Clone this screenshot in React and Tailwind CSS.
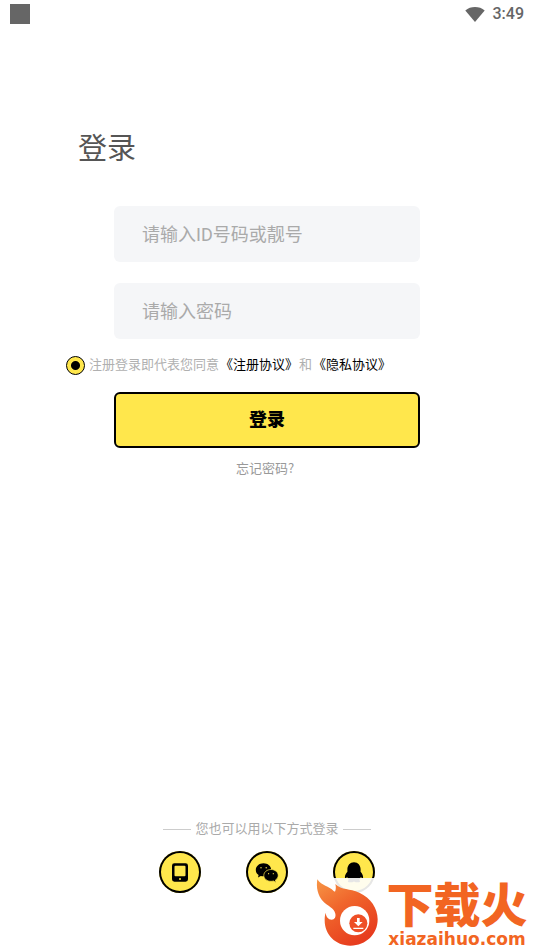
import React, { useState } from "react";

function WifiIcon() {
  return (
    <svg viewBox="0 0 20 15" className="h-[15px] w-5 fill-[#666666]" aria-hidden="true">
      <path d="M10 15 0.300 3.400C3 1.100 6.400 0 10 0s7 1.100 9.700 3.400z" />
    </svg>
  );
}

function TabletIcon() {
  return (
    <svg viewBox="0 0 42 42" className="size-full" aria-hidden="true">
      <path
        fillRule="evenodd"
        d="M15.400 12.300h11.200a2.400 2.400 0 0 1 2.400 2.400v13.600a2.400 2.400 0 0 1-2.400 2.400h-11.200a2.400 2.400 0 0 1-2.400-2.400v-13.600a2.400 2.400 0 0 1 2.400-2.400zm1.100 2.400a1 1 0 0 0-1 1v8.600a1 1 0 0 0 1 1h9a1 1 0 0 0 1-1v-8.600a1 1 0 0 0-1-1zm4.500 12.200a1 1 0 1 0 0 2 1 1 0 0 0 0-2z"
      />
    </svg>
  );
}

function WechatIcon() {
  return (
    <svg viewBox="0 0 42 42" className="size-full" aria-hidden="true">
      <path d="M17.500 12.300c-4.300 0-7.700 2.900-7.700 6.600 0 2.100 1 3.900 2.800 5.100l-.6 2.600 2.800-1.700c.9.300 1.800.4 2.700.4 4.300 0 7.700-2.900 7.700-6.500s-3.400-6.500-7.700-6.500z" />
      <path
        className="fill-black stroke-[#ffe74c]"
        strokeWidth="0.7"
        d="M25 18.500c-4 0-7.200 2.600-7.200 5.900s3.200 5.900 7.200 5.900c.8 0 1.600-.1 2.400-.4l2.600 1.500-.6-2.300c1.700-1.100 2.800-2.800 2.800-4.700 0-3.300-3.200-5.900-7.200-5.900z"
      />
      <g className="fill-[#ffe74c]">
        <circle cx="15" cy="16.800" r=".7" />
        <circle cx="20.200" cy="16.800" r=".7" />
        <circle cx="22.600" cy="22.700" r=".6" />
        <circle cx="27.300" cy="22.700" r=".6" />
      </g>
    </svg>
  );
}

function QQIcon() {
  return (
    <svg viewBox="0 0 42 42" className="size-full" aria-hidden="true">
      <path d="M21 11.200c-4 0-6.600 3.200-6.600 7.300v2.300c-1.400 1.600-2.700 3.600-2.500 5.800.1.900.8.700 1.200.3l1.100-1c.3 1.200.9 2.200 1.700 3-1.200.6-1.500 2.200.8 2.400 1.700.1 3.100-.2 4.300-.9 1.200.7 2.600 1 4.300.9 2.300-.2 2-1.800.8-2.400.8-.8 1.400-1.800 1.700-3l1.100 1c.4.4 1.100.6 1.200-.3.2-2.200-1.100-4.200-2.500-5.800v-2.300c0-4.100-2.600-7.300-6.600-7.300z" />
    </svg>
  );
}

function FlameLogo() {
  return (
    <svg viewBox="0 0 195 213" className="h-[71px] w-[65px] shrink-0" aria-hidden="true">
      <defs>
        <linearGradient id="flame" x1="0" y1="0" x2="0.600" y2="1">
          <stop offset="0" stopColor="#f79646" />
          <stop offset="0.450" stopColor="#f0662c" />
          <stop offset="1" stopColor="#e73c1e" />
        </linearGradient>
      </defs>
      <path
        fill="url(#flame)"
        d="M7 4C20 24 42 24 56 39c3 3 4 2 5-1 2-6 2-12 0-20 20 20 42 12 72 26 34 16 55 46 55 80 0 44-34 79-82 79-45 0-77-33-77-76 0-10 1-17 3-23 1 12 8 21 18 21 9-1 13-8 11-18C58 91 38 84 24 70 8 52 3 28 7 4z"
      />
      <circle cx="119" cy="128" r="44" fill="#fff" />
      <circle cx="130" cy="136" r="27" fill="#ee4f27" />
      <path fill="#fff" d="M126 120h8v12h9l-13 13-13-13h9zM115 149h30v4h-30z" />
    </svg>
  );
}

const methods = [
  { name: "手机登录", Icon: TabletIcon },
  { name: "微信登录", Icon: WechatIcon },
  { name: "QQ登录", Icon: QQIcon },
];

export default function App() {
  const [account, setAccount] = useState("");
  const [password, setPassword] = useState("");

  return (
    <div className="relative flex min-h-screen flex-col overflow-hidden bg-white font-['Roboto','Noto_Sans_CJK_SC',sans-serif]">
      <header className="flex h-7 items-center justify-between px-[10px]">
        <span className="size-5 bg-[#666666]" />
        <div className="flex items-center gap-2">
          <WifiIcon />
          <time className="text-base font-medium text-[#666666]">3:49</time>
        </div>
      </header>

      <main>
        <h1 className="mt-[100px] px-[78px] text-[29px] leading-[42px] text-[#555555]">登录</h1>
        <form onSubmit={(e) => e.preventDefault()}>
          <div className="mx-[114px] mt-9 flex flex-col gap-[21px]">
            <input
              type="text"
              aria-label="ID号码或靓号"
              placeholder="请输入ID号码或靓号"
              value={account}
              onChange={(e) => setAccount(e.target.value)}
              className="h-14 w-full rounded-md bg-[#f5f6f8] px-7 text-lg text-[#555555] outline-none placeholder:text-[#aaaaaa]"
            />
            <input
              type="password"
              aria-label="密码"
              placeholder="请输入密码"
              value={password}
              onChange={(e) => setPassword(e.target.value)}
              className="h-14 w-full rounded-md bg-[#f5f6f8] px-7 text-lg text-[#555555] outline-none placeholder:text-[#aaaaaa]"
            />
          </div>
          <div className="mt-4 flex items-center gap-1 pl-[66px] text-[13px] leading-5 text-[#b0b0b0]">
            <input
              id="agree"
              type="radio"
              defaultChecked
              className="size-[19px] shrink-0 appearance-none rounded-full border border-black bg-[#ffe74c] bg-[radial-gradient(circle,#000_4px,transparent_5px)]"
            />
            <p className="whitespace-nowrap">
              <label htmlFor="agree">注册登录即代表您同意</label>
              <a href="#terms" className="px-px text-black">《注册协议》</a>
              和
              <a href="#privacy" className="px-px text-black">《隐私协议》</a>
            </p>
          </div>
          <div className="mx-[114px] mt-[17px] flex flex-col items-center gap-[10px]">
            <button
              type="submit"
              className="h-14 w-full rounded-md border-2 border-black bg-[#ffe74c] text-lg font-black text-black"
            >
              登录
            </button>
            <a href="#forgot" className="pr-1 font-['Noto_Sans_CJK_SC',sans-serif] text-[13px] leading-5 text-[#999999]">
              忘记密码?
            </a>
          </div>
        </form>
      </main>

      <footer className="mt-auto flex flex-col items-center gap-3 pb-14">
        <div className="flex items-center gap-1 text-[13px] leading-5 text-[#aaaaaa]">
          <span className="h-px w-7 bg-[#cccccc]" />
          您也可以用以下方式登录
          <span className="h-px w-7 bg-[#cccccc]" />
        </div>
        <div className="flex gap-[45px]">
          {methods.map(({ name, Icon }) => (
            <button
              key={name}
              type="button"
              aria-label={name}
              className="size-[42px] rounded-full bg-[#ffe74c] ring-2 ring-black ring-inset"
            >
              <Icon />
            </button>
          ))}
        </div>
      </footer>

      <div className="absolute right-0 bottom-0 flex h-[71px] w-[219px] bg-white/90 text-[#f26522]">
        <FlameLogo />
        <div className="flex flex-1 flex-col items-center whitespace-nowrap pt-1">
          <span className="text-[47px] leading-[48px] font-black">下载火</span>
          <span className="font-['DejaVu_Sans'] text-[17px] leading-[18px] font-bold">xiazaihuo.com</span>
        </div>
      </div>
    </div>
  );
}
